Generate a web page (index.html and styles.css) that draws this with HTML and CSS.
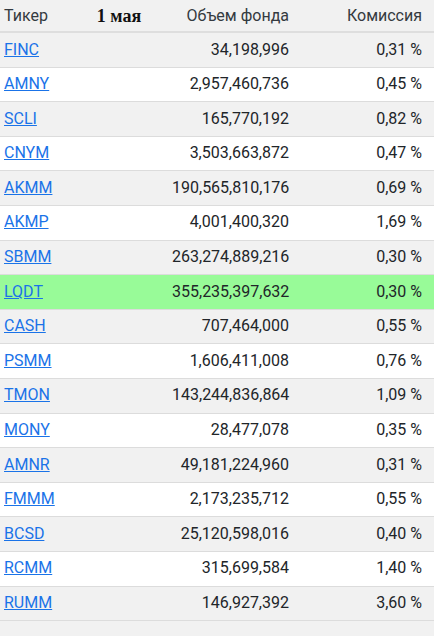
FILE: index.html
```html
<!DOCTYPE html>
<html lang="ru">
<head>
<meta charset="utf-8">
<link rel="stylesheet" href="styles.css">
</head>
<body>
<table class="funds">
  <colgroup>
    <col class="c-ticker"><col class="c-date"><col class="c-vol"><col class="c-fee">
  </colgroup>
  <thead>
    <tr>
      <th class="t-left">Тикер</th>
      <th class="t-date">1 мая</th>
      <th class="t-right">Объем фонда</th>
      <th class="t-right">Комиссия</th>
    </tr>
  </thead>
  <tbody>
    <tr><td><a href="#">FINC</a></td><td></td><td class="num">34,198,996</td><td class="num">0,31 %</td></tr>
    <tr><td><a href="#">AMNY</a></td><td></td><td class="num">2,957,460,736</td><td class="num">0,45 %</td></tr>
    <tr><td><a href="#">SCLI</a></td><td></td><td class="num">165,770,192</td><td class="num">0,82 %</td></tr>
    <tr><td><a href="#">CNYM</a></td><td></td><td class="num">3,503,663,872</td><td class="num">0,47 %</td></tr>
    <tr><td><a href="#">AKMM</a></td><td></td><td class="num">190,565,810,176</td><td class="num">0,69 %</td></tr>
    <tr><td><a href="#">AKMP</a></td><td></td><td class="num">4,001,400,320</td><td class="num">1,69 %</td></tr>
    <tr><td><a href="#">SBMM</a></td><td></td><td class="num">263,274,889,216</td><td class="num">0,30 %</td></tr>
    <tr class="hl"><td><a href="#">LQDT</a></td><td></td><td class="num">355,235,397,632</td><td class="num">0,30 %</td></tr>
    <tr><td><a href="#">CASH</a></td><td></td><td class="num">707,464,000</td><td class="num">0,55 %</td></tr>
    <tr><td><a href="#">PSMM</a></td><td></td><td class="num">1,606,411,008</td><td class="num">0,76 %</td></tr>
    <tr><td><a href="#">TMON</a></td><td></td><td class="num">143,244,836,864</td><td class="num">1,09 %</td></tr>
    <tr><td><a href="#">MONY</a></td><td></td><td class="num">28,477,078</td><td class="num">0,35 %</td></tr>
    <tr><td><a href="#">AMNR</a></td><td></td><td class="num">49,181,224,960</td><td class="num">0,31 %</td></tr>
    <tr><td><a href="#">FMMM</a></td><td></td><td class="num">2,173,235,712</td><td class="num">0,55 %</td></tr>
    <tr><td><a href="#">BCSD</a></td><td></td><td class="num">25,120,598,016</td><td class="num">0,40 %</td></tr>
    <tr><td><a href="#">RCMM</a></td><td></td><td class="num">315,699,584</td><td class="num">1,40 %</td></tr>
    <tr><td><a href="#">RUMM</a></td><td></td><td class="num">146,927,392</td><td class="num">3,60 %</td></tr>
  </tbody>
</table>
</body>
</html>
```

FILE: styles.css
```css
html, body {
  margin: 0;
  padding: 0;
  background: #f1f1f1;
}
body {
  font-family: Roboto, "Liberation Sans", sans-serif;
  font-size: 16px;
  color: #212529;
}
.funds {
  width: 434px;
  border-collapse: collapse;
  table-layout: fixed;
}
.c-ticker { width: 70px; }
.c-date { width: 98px; }
.c-vol { width: 133px; }
.c-fee { width: 133px; }

.funds th {
  height: 31px;
  padding: 0 12px 0 4px;
  font-weight: normal;
  font-size: 16px;
  line-height: 18px;
  color: #343a40;
  background: #f1f1f1;
  border-bottom: 2px solid #dedede;
  vertical-align: middle;
}
.funds th.t-left { text-align: left; }
.funds th.t-right { text-align: right; }
.funds th.t-date {
  text-align: center;
  padding: 0;
  font-family: "Liberation Serif", serif;
  font-weight: bold;
  font-size: 18px;
  color: #111;
}
.funds td {
  padding: 7.5px 12px 7.5px 4px;
  line-height: 18.59px;
  border-bottom: 1px solid #dcdcdc;
  vertical-align: middle;
}
.funds td.num { text-align: right; }
.funds tbody tr:nth-child(odd) { background: #f1f1f1; }
.funds tbody tr:nth-child(even) { background: #ffffff; }
.funds tbody tr.hl { background: #98fb98; }
.funds a {
  color: #1a73e8;
  text-decoration: underline;
}
```
